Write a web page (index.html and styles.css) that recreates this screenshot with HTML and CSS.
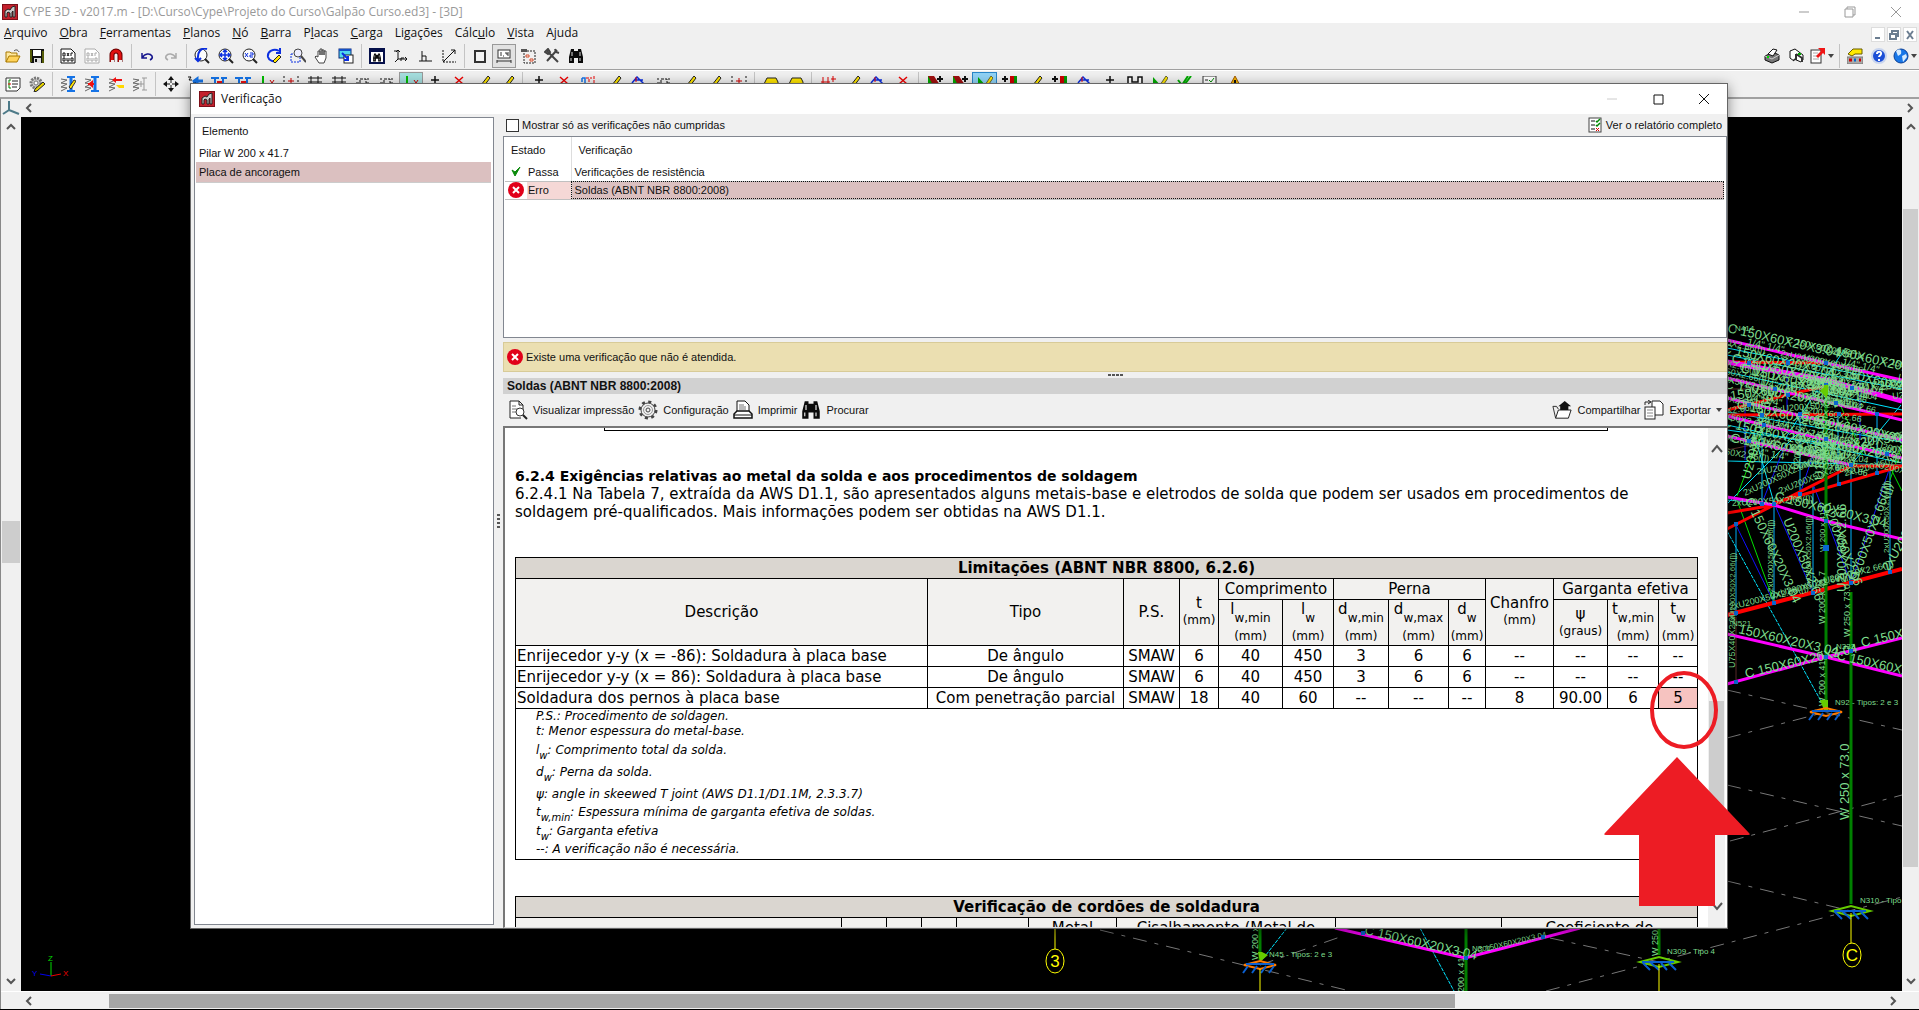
FILE: index.html
```html
<!DOCTYPE html>
<html lang="pt-BR">
<head>
<meta charset="utf-8">
<title>CYPE 3D - v2017.m</title>
<link rel="stylesheet" href="styles.css">
</head>
<body>
<svg class="defs" aria-hidden="true">
  <defs>
    <symbol id="i-app" viewBox="0 0 16 16"><rect width="16" height="16" fill="#7d0f18"/><rect x="1" y="1" width="14" height="14" fill="#c3202c"/><path d="M3 13V7l3-2 2 1 2-3 3-1v11h-2V7l-1 1v5H8V9L6 8 5 9v4z" fill="#c9c9c9" stroke="#222"/></symbol>
    <symbol id="i-open" viewBox="0 0 16 16"><path d="M1 14V4h4l1 1h6v3" fill="#ffe9a0" stroke="#a87900"/><path d="M1 14l3-6h11l-3 6z" fill="#ffd35a" stroke="#a87900"/><path d="M9 3c2-2 4-1 5 1" fill="none" stroke="#444"/></symbol>
    <symbol id="i-save" viewBox="0 0 16 16"><path d="M1 1h14v14H2l-1-1z" fill="#111"/><rect x="4" y="2" width="8" height="6" fill="#fff"/><rect x="5" y="10" width="7" height="5" fill="#ddd"/><rect x="6" y="11" width="2" height="3" fill="#111"/><path d="M2 2v12M14 3v12" stroke="#9aa800"/></symbol>
    <symbol id="i-dxf" viewBox="0 0 16 16"><path d="M1 1h10l4 4v10H1z" fill="#fff" stroke="currentColor"/><path d="M3 5v3h2V5zM7 5l2 3M9 5L7 8M11 8V5h2M3 10v3h2v-3zM7 10v3h2v-3M11 10h2v3h-2z" fill="none" stroke="currentColor"/></symbol>
    <symbol id="i-magnet" viewBox="0 0 16 16"><path d="M4 14V7a4 4 0 018 0v7" fill="none" stroke="#600" stroke-width="5"/><path d="M4 14V7a4 4 0 018 0v7" fill="none" stroke="#e01010" stroke-width="3"/><path d="M3 13h3M11 13h3" stroke="#eee" stroke-width="2"/></symbol>
    <symbol id="i-undo" viewBox="0 0 16 16"><path d="M3 5v5h5M3 10c3-5 8-5 10-2 1 2 0 3-2 4" fill="none" stroke="currentColor" stroke-width="1.5"/></symbol>
    <symbol id="i-lens" viewBox="0 0 16 16"><circle cx="7" cy="7" r="6" fill="#fff" fill-opacity=".7" stroke="#222"/><path d="M11 11l4 4" stroke="#222" stroke-width="2"/></symbol>
    <symbol id="i-zall" viewBox="0 0 16 16"><use href="#i-lens"/><path d="M7 2v10M2 7h10M5 4l2-2 2 2M5 10l2 2 2-2M4 5L2 7l2 2M10 5l2 2-2 2" fill="none" stroke="#0b2fe0" stroke-width="1.5"/></symbol>
    <symbol id="i-zprev" viewBox="0 0 16 16"><use href="#i-lens"/><path d="M13 1C7-1 3 4 4 12M1 10l3 3 3-3" fill="none" stroke="#0b2fe0" stroke-width="2"/></symbol>
    <symbol id="i-z2" viewBox="0 0 16 16"><use href="#i-lens"/><path d="M3 5l3 4M6 5L3 9M8 5h3v2H8v2h3" fill="none" stroke="#0b2fe0"/></symbol>
    <symbol id="i-redraw" viewBox="0 0 16 16"><path d="M13 3C8 0 1 3 2 9c1 4 6 5 9 4M10 5h4V0" fill="none" stroke="#0b2fe0" stroke-width="2"/><path d="M7 13l6-6 2 2-6 6z" fill="#ffe500" stroke="#222"/></symbol>
    <symbol id="i-zwin" viewBox="0 0 16 16"><rect x="1" y="6" width="9" height="8" fill="none" stroke="#0b2fe0" stroke-dasharray="2 1"/><circle cx="8" cy="5" r="4" fill="#eef" stroke="#444"/><path d="M11 8l5 6" stroke="#444" stroke-width="2"/></symbol>
    <symbol id="i-hand" viewBox="0 0 16 16"><path d="M5 15L1 9l1-1 2 1V3h2v4-6h2v6-5h2v5-4h2v7l-2 5z" fill="#fff" stroke="#444"/></symbol>
    <symbol id="i-fit" viewBox="0 0 16 16"><rect x="1" y="1" width="12" height="9" fill="#4fd8ef" stroke="#0a2a7a"/><rect x="1" y="1" width="12" height="2" fill="#1450c8"/><rect x="6" y="7" width="9" height="8" fill="#fff" stroke="#222"/><path d="M4 5l6 6M10 8v4H6" stroke="#0b2fe0" fill="none" stroke-width="2"/></symbol>
    <symbol id="i-bino" viewBox="0 0 16 16"><path d="M3 1h3v2h4V1h3l2 8v6h-5v-5H6v5H1V9z" fill="#0a0a0a"/><path d="M4 4v4M12 4v4M3 10v3M12 10v3" stroke="#ddd"/></symbol>
    <symbol id="i-findbox" viewBox="0 0 16 16"><rect x="1" y="1" width="14" height="14" fill="#fff" stroke="#05104a" stroke-width="2"/><rect x="1" y="1" width="14" height="3" fill="#05104a"/><use href="#i-bino" x="3" y="5" width="10" height="9"/></symbol>
    <symbol id="i-coord" viewBox="0 0 16 16"><path d="M5 2v9h9M3 4l2-2 2 2M12 9l2 2-2 2M5 11l-3 3M1 3h3M8 13v-3h3" fill="none" stroke="#111"/></symbol>
    <symbol id="i-perp" viewBox="0 0 16 16"><path d="M2 13h13M5 13V3M5 8h4v5" fill="none" stroke="#111"/></symbol>
    <symbol id="i-diag" viewBox="0 0 16 16"><path d="M2 14L14 2" stroke="#111"/><path d="M10 2h4v4" fill="none" stroke="#111"/><path d="M2 2v12h13" fill="none" stroke="#111" stroke-dasharray="2 1"/></symbol>
    <symbol id="i-square" viewBox="0 0 16 16"><rect x="3" y="3" width="10" height="11" fill="#f4f4f4" stroke="#333" stroke-width="2"/></symbol>
    <symbol id="i-dim" viewBox="0 0 16 16"><rect x="2" y="2" width="12" height="8" fill="#fff" stroke="#333"/><path d="M5 4v4M7 8h1M10 4v2h2M12 4v4M1 13h14M1 12v3M15 12v3" stroke="#333" fill="none"/></symbol>
    <symbol id="i-select" viewBox="0 0 16 16"><path d="M1 3h14v12H4V3" fill="none" stroke="#222" stroke-dasharray="2 1"/><path d="M1 1h6v3H1z" fill="#555"/><path d="M6 7h3v2H6zM10 11h3v2h-3z" fill="#fff" stroke="#d04a2a"/></symbol>
    <symbol id="i-tools" viewBox="0 0 16 16"><path d="M3 3l11 11M13 2L3 13" stroke="#444" stroke-width="2"/><path d="M1 4l3-3 2 3-2 2zM11 1l1 3 3 1" fill="none" stroke="#444" stroke-width="2"/></symbol>
    <symbol id="i-printer" viewBox="0 0 16 16"><path d="M1 8l8-4 6 3v5l-7 3-7-3z" fill="#777" stroke="#111"/><path d="M4 6l5-5 4 1-4 6z" fill="#fff" stroke="#111"/><path d="M1 8l7 3 7-4" stroke="#ccc" fill="none"/><path d="M3 9h2" stroke="#0d0" stroke-width="2"/></symbol>
    <symbol id="i-plot" viewBox="0 0 16 16"><path d="M2 3l5-2 8 6v5l-2 2-7-3v2l-4-3z" fill="#fff" stroke="#111"/><path d="M8 6l6 4v4M8 6v6" stroke="#333" stroke-width="2" fill="none"/><path d="M10 6h3" stroke="#0a0" stroke-width="2"/></symbol>
    <symbol id="i-export" viewBox="0 0 16 16"><rect x="1" y="2" width="10" height="13" fill="#fff" stroke="#333"/><path d="M3 5h5M3 8h6M3 11h6" stroke="#aaa"/><path d="M8 0h7v7l-2-2-5 5-2-2 5-5z" fill="#f01515"/></symbol>
    <symbol id="i-config" viewBox="0 0 16 16"><path d="M1 6l5-5h9v5H8L5 8z" fill="#ffe900" stroke="#665a00"/><rect x="0" y="9" width="16" height="7" fill="#aaa" stroke="#777"/><path d="M2 12h3" stroke="#c00" stroke-width="3"/><path d="M7 12h2" stroke="#06c" stroke-width="3"/><path d="M12 12h2" stroke="#c00" stroke-width="3"/></symbol>
    <symbol id="i-help" viewBox="0 0 16 16"><circle cx="8" cy="8" r="7" fill="#1c4fd6" stroke="#c9d5ee" stroke-width="2"/><path d="M6 6c0-3 5-3 4 0 0 1-2 2-2 3M8 11v2" stroke="#fff" stroke-width="2" fill="none"/></symbol>
    <symbol id="i-globe" viewBox="0 0 16 16"><circle cx="8" cy="8" r="7" fill="#1877e8" stroke="#0a3f96"/><path d="M3 3c4-3 6-1 5 3l-3 2zM9 8l4-2 1 3-4 5z" fill="#d6ecff"/></symbol>
    <symbol id="i-list" viewBox="0 0 16 16"><path d="M1 2h14v10l-3 3H1z" fill="#fff" stroke="#333"/><path d="M6 4H4v8h2" fill="none" stroke="#080"/><path d="M7 5h6M7 8h6M7 11h5" stroke="#222"/><path d="M3 8h3" stroke="#d00"/></symbol>
    <symbol id="i-gearpen" viewBox="0 0 16 16"><circle cx="7" cy="7" r="5" fill="#ccc" stroke="#777" stroke-width="3" stroke-dasharray="2 1"/><circle cx="7" cy="7" r="2" fill="#fff" stroke="#777"/><path d="M6 13l8-7 2 2-8 7-3 1z" fill="#e8d400" stroke="#222"/></symbol>
    <symbol id="i-zig" viewBox="0 0 16 16"><path d="M1 3l6 1-6 3 6 1-6 3 6 1-6 3" fill="none" stroke="#666"/></symbol>
    <symbol id="i-beam" viewBox="0 0 16 16"><path d="M7 1h8M7 15h8" stroke="#1573e6" stroke-width="2"/><path d="M11 1v14" stroke="#1573e6" stroke-width="3"/></symbol>
    <symbol id="i-bpen" viewBox="0 0 16 16"><use href="#i-zig"/><use href="#i-beam"/><path d="M9 11l5-7 2 1-5 8z" fill="#ffe500" stroke="#333"/></symbol>
    <symbol id="i-barr" viewBox="0 0 16 16"><use href="#i-zig"/><use href="#i-beam"/><path d="M4 8l5-4v8z" fill="#e11"/><path d="M4 8h6" stroke="#e11" stroke-width="2"/></symbol>
    <symbol id="i-brow" viewBox="0 0 16 16"><use href="#i-zig"/><path d="M5 4h9" stroke="#e11" stroke-width="2"/><path d="M4 4l4-3v6z" fill="#e11"/><path d="M8 9h8v3h-5z" fill="#ffd800"/></symbol>
    <symbol id="i-bgray" viewBox="0 0 16 16"><use href="#i-zig"/><path d="M6 8h6M9 5v6M12 2v12M10 2h5M10 14h5" fill="none" stroke="#999"/></symbol>
    <symbol id="i-move" viewBox="0 0 16 16"><path d="M8 0l3 4H5zM8 16l3-4H5zM0 8l4-3v6zM16 8l-4-3v6z" fill="#111"/><path d="M8 3v4M8 9v4M3 8h4M9 8h4" stroke="#111"/></symbol>
    <symbol id="i-a" viewBox="0 0 16 16"><path d="M1 1h3L2 4h3" stroke="#111" fill="none"/><path d="M6 6l4-3v12M10 5h6" stroke="#1573e6" stroke-width="3"/></symbol>
    <symbol id="i-tt" viewBox="0 0 16 16"><path d="M0 2h8M10 2h6M4 2v12M12 2v12" stroke="#1573e6" stroke-width="2"/><path d="M6 6h5" stroke="#e11" stroke-width="2"/></symbol>
    <symbol id="i-axis" viewBox="0 0 16 16"><path d="M4 0v8h5" stroke="#0b0" stroke-width="2" fill="none"/><path d="M11 4l2 3 2-3" stroke="#c00" fill="none"/></symbol>
    <symbol id="i-dot" viewBox="0 0 16 16"><path d="M1 0v16M15 0v16" stroke="#111" stroke-dasharray="2 2"/><path d="M5 5h6M8 2v6" stroke="#c00"/></symbol>
    <symbol id="i-grid" viewBox="0 0 16 16"><path d="M1 2h14M4 0v9M11 0v9M1 6h14" stroke="#111" fill="none"/></symbol>
    <symbol id="i-box" viewBox="0 0 16 16"><path d="M5 3h6v8H5zM1 7h4M11 7h4M2 2v2M13 2v2" stroke="#111" fill="none" stroke-dasharray="3 1"/></symbol>
    <symbol id="i-plus" viewBox="0 0 16 16"><path d="M4 4h8M8 0v8" stroke="#111" stroke-width="1.5"/></symbol>
    <symbol id="i-x" viewBox="0 0 16 16"><path d="M4 1l8 7M12 1L4 8" stroke="#e00" stroke-width="1.5"/></symbol>
    <symbol id="i-pen" viewBox="0 0 16 16"><path d="M6 9l7-9 2 2-6 8z" fill="#ffe500" stroke="#222"/></symbol>
    <symbol id="i-red" viewBox="0 0 16 16"><path d="M1 2h3v8M1 2v4" stroke="#1573e6" fill="none" stroke-width="1.5"/><path d="M8 3v7M5 2h6M13 0v9" stroke="#e00" fill="none" stroke-dasharray="3 1"/></symbol>
    <symbol id="i-loads" viewBox="0 0 16 16"><path d="M3 1v9M8 1v9M1 6h9M11 3h5M13 0v6" stroke="#d00" fill="none"/></symbol>
    <symbol id="i-blue" viewBox="0 0 16 16"><path d="M1 7l5-6 8 8M3 4h9" stroke="#0b2fe0" fill="none" stroke-width="1.5"/><path d="M5 1v5" stroke="#e00"/></symbol>
    <symbol id="i-plate" viewBox="0 0 16 16"><path d="M1 0h6l6 9H1z" fill="#a01010"/><path d="M1 0l5 9H1z" fill="#0a0"/><path d="M10 3h6M13 0v6" stroke="#111" stroke-width="2"/></symbol>
    <symbol id="i-tri" viewBox="0 0 16 16"><path d="M1 1l9 10H1z" fill="#0a0"/><path d="M8 9l6-9 2 2-6 9z" fill="#ffe500" stroke="#663"/></symbol>
    <symbol id="i-col" viewBox="0 0 16 16"><path d="M0 3h6M3 0v6" stroke="#111" stroke-width="2"/><rect x="8" y="0" width="4" height="12" fill="#c00"/><rect x="12" y="0" width="3" height="12" fill="#090"/></symbol>
    <symbol id="i-yel" viewBox="0 0 16 16"><path d="M1 8l3-6h9l2 4v4H1z" fill="#ffe500" stroke="#222"/></symbol>
    <symbol id="i-frame" viewBox="0 0 16 16"><path d="M1 12V1h4v5h6V1h4v11" fill="#fff" stroke="#111" stroke-width="1.5"/></symbol>
    <symbol id="i-check" viewBox="0 0 16 16"><path d="M1 4l4 5 6-9M8 8l6-8" stroke="#0a0" fill="none" stroke-width="2"/></symbol>
    <symbol id="i-chklist" viewBox="0 0 16 16"><rect x="1" y="0" width="13" height="14" fill="#fff" stroke="#333"/><path d="M3 4h3M3 9h3" stroke="#222"/><path d="M7 4l2 2 3-4M7 9l2 2 3-4" stroke="#080" fill="none"/></symbol>
    <symbol id="i-warn" viewBox="0 0 16 16"><path d="M8 0l7 13H1z" fill="#f5b400" stroke="#a05a00"/><path d="M8 4v5" stroke="#111" stroke-width="2"/></symbol>
    <symbol id="i-err" viewBox="0 0 16 16"><circle cx="8" cy="8" r="8" fill="#e1001a"/><path d="M5 5l6 6M11 5l-6 6" stroke="#fff" stroke-width="2"/></symbol>
    <symbol id="i-pass" viewBox="0 0 12 12"><path d="M2 4l3 6 5-9-5 5z" fill="#0a8a0a" stroke="#0a8a0a"/></symbol>
    <symbol id="i-report" viewBox="0 0 14 16"><rect x="1" y="1" width="12" height="14" fill="#fff" stroke="#444"/><path d="M3 4h4M3 8h4M3 12h4" stroke="#111"/><path d="M8 4l1 1 3-3M8 8l1 1 3-3" fill="none" stroke="#080" stroke-width="1.5"/><path d="M8 11l3 3M11 11l-3 3" stroke="#d00"/></symbol>
    <symbol id="i-preview" viewBox="0 0 20 20"><path d="M13 18H2V1h9l4 4v5M11 1v4h4" fill="#fff" stroke="#222"/><path d="M4 6h4M4 9h5M4 12h4" stroke="#777"/><circle cx="12" cy="12" r="4" fill="#fff" stroke="#333"/><path d="M15 15l4 4" stroke="#222" stroke-width="2"/></symbol>
    <symbol id="i-gear" viewBox="0 0 20 20"><circle cx="10" cy="10" r="8" fill="none" stroke="#444" stroke-width="3" stroke-dasharray="3 3.28"/><circle cx="10" cy="10" r="7" fill="#f0f0f0" stroke="#444"/><circle cx="10" cy="10" r="2" fill="none" stroke="#444"/><circle cx="10" cy="10" r="4.5" fill="none" stroke="#999"/></symbol>
    <symbol id="i-print" viewBox="0 0 20 20"><path d="M4 11V1h8l4 4v6" fill="#fff" stroke="#111"/><path d="M6 5h5M6 7h7M6 9h7" stroke="#777"/><path d="M1 18v-4l3-3h12l3 3v4z" fill="#fff" stroke="#111" stroke-width="1.5"/><path d="M1 15h18" stroke="#111"/></symbol>
    <symbol id="i-share" viewBox="0 0 22 20"><path d="M1 6h4l2 3M1 6l3 13" fill="#ddd" stroke="#222"/><path d="M4 19L7 10h14l-3 9z" fill="#fff" stroke="#111"/><path d="M9 10V6H7l7-6 7 6h-3v4z" fill="#111"/></symbol>
    <symbol id="i-exp" viewBox="0 0 20 20"><path d="M8 1h8l3 3v11H8z" fill="#fff" stroke="#222"/><rect x="1" y="7" width="10" height="12" fill="#fff" stroke="#222"/><path d="M3 10h6M3 13h6M3 16h6" stroke="#888"/><path d="M1 5V2h5M4 0l3 2-3 2" fill="none" stroke="#222"/></symbol>
    <g id="support"><path d="M-16 0L0 4 16 0 0 -4z" fill="none" stroke="currentColor" stroke-width="2"/><path d="M-14 -1h28M-12 1l-5 7M-3 1l-5 7M6 1l-5 7M14 1l-5 7" stroke="#0a5fd0" stroke-width="2" fill="none"/></g>
    <g id="support-flip"><path d="M-19 0L0 -5 19 0 0 5z" fill="none" stroke="#6c0" stroke-width="2"/><path d="M-17 0h32M-16 1l7 7M-8 1l8 7M2 1l6 7M10 1l7 7" stroke="#0a5fd0" stroke-width="2" fill="none"/></g>
    <g id="tangle">
      <text>C 150X60X20X3.04</text><text x="-40" y="13" font-size="9">2xU200X50X2.66([])</text><text x="60" y="-3" font-size="9">C 150X60X20X3.04</text><text x="22" y="8" font-size="10">1/4" 1/4"</text><text x="80" y="10" font-size="9">U200X60X2.66</text>
    </g>
  </defs>
</svg>

<header class="titlebar">
  <svg class="ic"><use href="#i-app"/></svg>
  <h1>CYPE 3D - v2017.m - [D:\Curso\Cype\Projeto do Curso\Galpão Curso.ed3] - [3D]</h1>
  <div class="winbtns pale">
    <button aria-label="Minimizar"><svg viewBox="0 0 12 12"><path d="M1 6h10"/></svg></button>
    <button aria-label="Restaurar"><svg viewBox="0 0 12 12"><path d="M1 3h8v8H1zM3 3V1h8v8H9"/></svg></button>
    <button aria-label="Fechar"><svg viewBox="0 0 12 12"><path d="M1 1l10 10M11 1L1 11"/></svg></button>
  </div>
</header>

<nav class="menubar">
  <a href="#"><u>A</u>rquivo</a><a href="#"><u>O</u>bra</a><a href="#"><u>F</u>erramentas</a><a href="#"><u>P</u>lanos</a><a href="#"><u>N</u>ó</a><a href="#"><u>B</u>arra</a><a href="#">P<u>l</u>acas</a><a href="#"><u>C</u>arga</a><a href="#">Ligações</a><a href="#">Cálc<u>u</u>lo</a><a href="#"><u>V</u>ista</a><a href="#">Ajuda</a>
  <div class="mdi">
    <button aria-label="Minimizar janela"><svg viewBox="0 0 12 12"><path d="M3 9h5"/></svg></button>
    <button aria-label="Restaurar janela"><svg viewBox="0 0 12 12"><path d="M2 5h6v5H2zM4 5V2h6v5H8"/></svg></button>
    <button aria-label="Fechar janela"><svg viewBox="0 0 12 12"><path d="M3 2l6 8M9 2l-6 8"/></svg></button>
  </div>
</nav>

<div class="toolbar">
  <button aria-label="Abrir"><svg><use href="#i-open"/></svg></button><button aria-label="Salvar"><svg><use href="#i-save"/></svg></button><i></i>
  <button aria-label="DXF"><svg><use href="#i-dxf"/></svg></button><button class="dim" aria-label="Camadas DXF"><svg><use href="#i-dxf"/></svg></button><button aria-label="Capturas"><svg><use href="#i-magnet"/></svg></button><i></i>
  <button class="navy" aria-label="Desfazer"><svg><use href="#i-undo"/></svg></button><button class="dim flip" aria-label="Refazer"><svg><use href="#i-undo"/></svg></button><i></i>
  <button aria-label="Vista anterior"><svg><use href="#i-zprev"/></svg></button><button aria-label="Vista completa"><svg><use href="#i-zall"/></svg></button><button aria-label="Duplicar"><svg><use href="#i-z2"/></svg></button><button aria-label="Redesenhar"><svg><use href="#i-redraw"/></svg></button><button aria-label="Janela de zoom"><svg><use href="#i-zwin"/></svg></button><button aria-label="Mover vista"><svg><use href="#i-hand"/></svg></button><button aria-label="Ajustar"><svg><use href="#i-fit"/></svg></button><i></i>
  <button aria-label="Localizar"><svg><use href="#i-findbox"/></svg></button><button aria-label="Coordenadas"><svg><use href="#i-coord"/></svg></button><button aria-label="Ortogonal"><svg><use href="#i-perp"/></svg></button><button aria-label="Diagonal"><svg><use href="#i-diag"/></svg></button><i></i>
  <button aria-label="Quadro"><svg><use href="#i-square"/></svg></button><button class="on" aria-label="Cotas"><svg><use href="#i-dim"/></svg></button><button aria-label="Seleção"><svg><use href="#i-select"/></svg></button><button aria-label="Ferramentas"><svg><use href="#i-tools"/></svg></button><button aria-label="Procurar"><svg><use href="#i-bino"/></svg></button>
  <span class="grow"></span>
  <button aria-label="Imprimir"><svg><use href="#i-printer"/></svg></button><button aria-label="Plotar"><svg><use href="#i-plot"/></svg></button><button class="wide" aria-label="Exportar"><svg><use href="#i-export"/></svg><b></b></button><i></i>
  <button aria-label="Configurar"><svg><use href="#i-config"/></svg></button><button aria-label="Ajuda"><svg><use href="#i-help"/></svg></button><button class="wide" aria-label="Web"><svg><use href="#i-globe"/></svg><b></b></button>
</div>

<div class="toolbar second">
  <button aria-label="Listagem"><svg><use href="#i-list"/></svg></button><button aria-label="Opções"><svg><use href="#i-gearpen"/></svg></button><i></i>
  <button aria-label="Editar perfil"><svg><use href="#i-bpen"/></svg></button><button aria-label="Atribuir"><svg><use href="#i-barr"/></svg></button><button aria-label="Retirar"><svg><use href="#i-brow"/></svg></button><button aria-label="Grupo"><svg><use href="#i-bgray"/></svg></button><i></i>
  <button aria-label="Mover"><svg><use href="#i-move"/></svg></button><button aria-label="Girar"><svg><use href="#i-a"/></svg></button><button aria-label="Viga"><svg><use href="#i-tt"/></svg></button><button aria-label="Viga dupla"><svg><use href="#i-tt"/></svg></button><button aria-label="Eixos"><svg><use href="#i-axis"/></svg></button><button aria-label="Pontos"><svg><use href="#i-dot"/></svg></button><button aria-label="Grade"><svg><use href="#i-grid"/></svg></button><button aria-label="Malha"><svg><use href="#i-grid"/></svg></button><button aria-label="Caixa"><svg><use href="#i-box"/></svg></button><button aria-label="Recorte"><svg><use href="#i-box"/></svg></button><button class="on teal" aria-label="Eixos locais"><svg><use href="#i-axis"/></svg></button><button aria-label="Novo nó"><svg><use href="#i-plus"/></svg></button><button aria-label="Apagar nó"><svg><use href="#i-x"/></svg></button><button aria-label="Editar nó"><svg><use href="#i-pen"/></svg></button><button aria-label="Editar apoio"><svg><use href="#i-pen"/></svg></button><i></i>
  <div class="loose">
  <button aria-label="Nova barra"><svg><use href="#i-plus"/></svg></button><button aria-label="Apagar barra"><svg><use href="#i-x"/></svg></button><button aria-label="Dividir"><svg><use href="#i-red"/></svg></button><button aria-label="Editar barra"><svg><use href="#i-pen"/></svg></button><button aria-label="Rótulas"><svg><use href="#i-blue"/></svg></button><button aria-label="Flecha"><svg><use href="#i-box"/></svg></button><button aria-label="Flambagem"><svg><use href="#i-pen"/></svg></button><button aria-label="Perfil"><svg><use href="#i-pen"/></svg></button><button aria-label="Info"><svg><use href="#i-dot"/></svg></button><i></i>
  <button aria-label="Placa"><svg><use href="#i-yel"/></svg></button><button aria-label="Laje"><svg><use href="#i-yel"/></svg></button><i></i>
  <button aria-label="Nova carga"><svg><use href="#i-loads"/></svg></button><button aria-label="Editar carga"><svg><use href="#i-pen"/></svg></button><button aria-label="Mover carga"><svg><use href="#i-blue"/></svg></button><button aria-label="Apagar carga"><svg><use href="#i-x"/></svg></button><i></i>
  <button aria-label="Gerar ligação"><svg><use href="#i-plate"/></svg></button><button aria-label="Apagar ligação"><svg><use href="#i-plate"/></svg></button><button class="on sky" aria-label="Editar ligação"><svg><use href="#i-tri"/></svg></button><button aria-label="Nova placa"><svg><use href="#i-col"/></svg></button><button aria-label="Editar placa"><svg><use href="#i-pen"/></svg></button><button aria-label="Girar placa"><svg><use href="#i-col"/></svg></button><button aria-label="Igualar"><svg><use href="#i-blue"/></svg></button><button aria-label="Cotar"><svg><use href="#i-plus"/></svg></button><button aria-label="Pórtico"><svg><use href="#i-frame"/></svg></button><button aria-label="Soldas"><svg><use href="#i-tri"/></svg></button><button aria-label="Verificar"><svg><use href="#i-check"/></svg></button><button aria-label="Verificações"><svg><use href="#i-chklist"/></svg></button><button aria-label="Avisos"><svg><use href="#i-warn"/></svg></button>
  </div>
</div>

<main class="view">
  <div class="corner"><svg viewBox="0 0 18 18"><path d="M7 2v9l-6 4M7 11l10 4" fill="none" stroke="#4d7a88" stroke-width="2"/></svg></div>
  <div class="hbar"><svg class="chev"><path d="M7 2L3 6l4 4"/></svg><span class="grow"></span><svg class="chev"><path d="M4 2l4 4-4 4"/></svg></div>
  <div class="vbar left"><svg class="chev"><path d="M2 8l4-4 4 4"/></svg><span></span><svg class="chev"><path d="M2 4l4 4 4-4"/></svg></div>
  <svg class="scene" viewBox="21 117 1881 874" preserveAspectRatio="xMaxYMax slice">
    <g fill="none" stroke="#777" stroke-dasharray="14 8 4 8">
      <path d="M1727 690L1902 730M1727 738L1826 712M1727 785L1902 826M1730 841L1902 795M1727 881L1851 911M1546 991L1902 897M1100 930L1350 991M1260 965L1340 937M1550 938L1659 962"/>
    </g>
    <g fill="none" stroke="#5a2c2c"><path d="M1727 389H1902M1727 450l60-12h115M1736 617v64"/></g>
    <g fill="none" stroke="#00b4ff"><path d="M1736 523v93M1762 410v93M1774 503v100M1800 414v80M1813 484v109M1838 414v70M1851 465v118M1877 412v60M1890 467v105"/></g>
    <g fill="none" stroke="#00e5ff"><path d="M1727 348l175 35M1727 355l175 34M1727 372l175 38M1727 412l175 30M1727 425l175 38M1727 461l175 4M1727 504l75-75M1727 500l47 4M1774 503l-20-70M1784 440l60-90M1851 465l50-60M1727 430l165 22"/><path d="M1727 531L1822 703M1287 928l-25 32M1420 928l34 63" stroke-dasharray="4 1"/></g>
    <g fill="none" stroke="#1010ff"><path d="M1736 525l38 78M1774 503l39 90M1813 484l38 99 39-116M1762 503l24-60M1800 494l20-60M1745 400v60M1787 360v50M1860 380v60"/></g>
    <g fill="none" stroke="#00e000"><path d="M1737 500l37 102M1762 430l-25 66M1838 400l25 55M1890 467l12 24M1890 480l12-35"/></g>
    <g fill="none" stroke="#f00" stroke-width="3"><path d="M1727 362l99 1M1727 410l60-15 39-9M1727 415l175-1M1727 513l47-8M1727 529l47-24 77-39h51M1774 503l128-37"/><path d="M1727 615L1902 569" stroke-width="4"/></g>
    <g fill="none" stroke="#f0f" stroke-width="3"><path d="M1727 340l99 23 76 17M1727 378l175 42M1727 398l175 42M1727 416l175 42M1727 436l124 29M1727 497l47 8 52 16 76 18M1727 634l99 23 76 19M1727 684l99-27 76-19M1335 928l130 30 35-9 80-21"/><path d="M1727 362l99 18 76 21" stroke-width="5"/></g>
    <g fill="none" stroke="#008000" stroke-width="3"><path d="M1826 385v315M1851 592v312M1659 927v28M1260 927v33M1466 928v63"/></g>
    <g fill="#7ddc8c" font-size="13">
      <use href="#tangle" transform="translate(1727 332) rotate(13)"/>
      <use href="#tangle" transform="translate(1722 352) rotate(13)"/>
      <use href="#tangle" transform="translate(1731 362) rotate(13)"/>
      <use href="#tangle" transform="translate(1740 372) rotate(13)"/>
      <use href="#tangle" transform="translate(1724 388) rotate(10)"/>
      <use href="#tangle" transform="translate(1718 402) rotate(-8)"/>
      <use href="#tangle" transform="translate(1736 408) rotate(13)"/>
      <use href="#tangle" transform="translate(1722 426) rotate(13)"/>
      <use href="#tangle" transform="translate(1730 442) rotate(10)"/>
      <use href="#tangle" transform="translate(1822 352) rotate(13)"/>
      <use href="#tangle" transform="translate(1830 374) rotate(13)"/>
      <use href="#tangle" transform="translate(1812 396) rotate(-5)"/>
      <use href="#tangle" transform="translate(1802 440) rotate(13)"/>
      <use href="#tangle" transform="translate(1800 420) rotate(13)"/>
      <use href="#tangle" transform="translate(1795 456) rotate(-8)"/>
      <text transform="translate(1774 500) rotate(14)">C 150X60X20X3.04</text>
      <text transform="translate(1745 496) rotate(-25)" font-size="9">2xU200X50X2.66([])</text>
      <text transform="translate(1780 494) rotate(-22)" font-size="9">2xU200X50X2.66([])</text>
      <text transform="translate(1732 506) rotate(-3)" font-size="9">2xU200X50X2.66([])</text>
      <text transform="translate(1845 476) rotate(-14)" font-size="9">2xU200X50X2.66</text>
      <text transform="translate(1730 610) rotate(-14)" font-size="9">2xU200X50X2.66([])</text>
      <text transform="translate(1772 598) rotate(-14)" font-size="9">2xU200X50X2.66([])</text>
      <text transform="translate(1815 586) rotate(-14)" font-size="9">2xU200X50X2.66([])</text>
      <text transform="translate(1745 500) rotate(65)">C 150X60X20X3.04</text>
      <text transform="translate(1783 520) rotate(68)">U200X50X2.66</text>
      <text transform="translate(1822 505) rotate(68)">U200X50X2.66</text>
      <text transform="translate(1857 582) rotate(-70)">U200X50X2.66([])</text>
      <text transform="translate(1846 592) rotate(-90)">U200X60X2.66</text>
      <text transform="translate(1824 480) rotate(-90)">U150X2.66</text>
      <text transform="translate(1735 625) rotate(-90)" font-size="8">2xU200X50X2.66([])</text>
      <text transform="translate(1773 592) rotate(-90)" font-size="8">2xU200X50X2.66([])</text>
      <text transform="translate(1811 588) rotate(-90)" font-size="8">2xU200X50X2.66([])</text>
      <text transform="translate(1889 553) rotate(-90)" font-size="8">2xU200X50X2.66([])</text>
      <text transform="translate(1798 470) rotate(-80)" font-size="9">U200X50X2.66</text>
      <text transform="translate(1750 480) rotate(-75)">U200X50X2.66</text>
      <text transform="translate(1889 572) rotate(-60)">2xU200X50X2.66</text>
      <text transform="translate(1825 552) rotate(-90)" font-size="8">W 200 x 41.7</text>
      <text transform="translate(1825 624) rotate(-90)" font-size="9">W 200 x 41.7</text>
      <text transform="translate(1850 637) rotate(-90)" font-size="9">W 250 x 73.0</text>
      <text transform="translate(1825 706) rotate(-90)" font-size="9">W 200 x 41.7</text>
      <text transform="translate(1735 668) rotate(-90)" font-size="9">U75X40X2.00</text>
      <text transform="translate(1738 633) rotate(13)">150X60X20X3.04</text>
      <text transform="translate(1746 678) rotate(-13)">C 150X60X20X3.04</text>
      <text transform="translate(1836 659) rotate(13)">C 150X60X20</text>
      <text transform="translate(1862 647) rotate(-13)">C 150X60</text>
      <text x="1732" y="626" font-size="8">N521</text>
      <text x="1836" y="649" font-size="8">N333</text>
      <text x="1735" y="331" font-size="8">N414</text>
      <text x="1838" y="355" font-size="8">N404</text>
      <text x="1835" y="705" font-size="8">N92 - Tipos: 2 e 3</text>
      <text x="1860" y="903" font-size="8">N310 - Tipo</text>
      <text x="1667" y="954" font-size="8">N309 - Tipo 4</text>
      <text x="1269" y="957" font-size="8">N45 - Tipos: 2 e 3</text>
      <text transform="translate(1849 820) rotate(-90)">W 250 x 73.0</text>
      <text transform="translate(1658 956) rotate(-90)" font-size="9">W 250 x 73.0</text>
      <text transform="translate(1258 960) rotate(-90)" font-size="9">W 200 x 41.7</text>
      <text transform="translate(1464 992) rotate(-90)" font-size="9">200 x 41.7</text>
      <text transform="translate(1364 934) rotate(13)">C 150X60X20X3.04</text>
      <text x="1472" y="951" font-size="8">N301</text>
      <text transform="translate(1478 953) rotate(-13)" font-size="8">C 150X60X20X3.04</text>
    </g>
    <path fill="#0a66d0" d="M1747 361h4v4h-4zM1786 361h4v4h-4zM1824 361h4v4h-4zM1773 387h4v4h-4zM1786 393h4v4h-4zM1824 383h4v4h-4zM1850 386h4v4h-4zM1747 403h4v4h-4zM1760 413h4v4h-4zM1798 412h4v4h-4zM1834 401h4v4h-4zM1837 412h4v4h-4zM1875 412h4v4h-4zM1762 423h4v4h-4zM1747 439h4v4h-4zM1824 437h4v4h-4zM1849 463h4v4h-4zM1885 452h4v4h-4zM1875 471h4v4h-4zM1734 522h4v4h-4zM1760 502h4v4h-4zM1772 502h4v4h-4zM1798 492h4v4h-4zM1837 482h4v4h-4zM1824 519h4v4h-4zM1823 545h6v6h-6zM1734 611h4v4h-4zM1772 601h4v4h-4zM1811 591h4v4h-4zM1849 581h4v4h-4zM1888 570h4v4h-4zM1824 655h4v4h-4zM1849 649h4v4h-4zM1734 680h4v4h-4zM1361 931h4v4h-4zM1464 956h4v4h-4zM1541 935h4v4h-4z"/>
    <path fill="#6c0" d="M1820 391l7-7v14zM1820 700h8v10h-4zM1258 952h4l6 3-8 7zM1824 385h4v10h-4z"/>
    <use href="#support" x="1826" y="712" color="#ff7a00"/>
    <use href="#support" x="1260" y="965" color="#ff7a00"/>
    <use href="#support-flip" x="1851" y="911"/>
    <use href="#support-flip" x="1659" y="962"/>
    <g stroke="#ff0" fill="none"><path d="M1851 913v30M1659 964v27M1260 969v22M1055 928v21"/><ellipse cx="1852" cy="955" rx="9" ry="12"/><ellipse cx="1055" cy="961" rx="9" ry="12"/></g>
    <g fill="#ff0" font-size="17" text-anchor="middle"><text x="1852" y="961">C</text><text x="1055" y="967">3</text></g>
    <path d="M51 962v14" stroke="#0d0"/><path d="M51 976l10-2" stroke="#e00"/><path d="M51 976l-11-2" stroke="#00e"/>
    <g font-size="8"><text x="48" y="961" fill="#0d0">Z</text><text x="63" y="976" fill="#e00">X</text><text x="32" y="976" fill="#00e">Y</text></g>
  </svg>
  <div class="vbar right"><svg class="chev"><path d="M2 8l4-4 4 4"/></svg><span></span><svg class="chev"><path d="M2 4l4 4 4-4"/></svg></div>
  <div class="hbar bottom"><svg class="chev"><path d="M7 2L3 6l4 4"/></svg><span class="thumb"></span><svg class="chev"><path d="M4 2l4 4-4 4"/></svg></div>
</main>

<section class="dialog" role="dialog" aria-label="Verificação">
  <header class="dlgtitle">
    <svg class="ic"><use href="#i-app"/></svg>
    <h2>Verificação</h2>
    <div class="winbtns">
      <button class="off" aria-label="Minimizar"><svg viewBox="0 0 12 12"><path d="M1 6h10"/></svg></button>
      <button aria-label="Maximizar"><svg viewBox="0 0 12 12"><path d="M2 2h9v9H2z"/></svg></button>
      <button aria-label="Fechar"><svg viewBox="0 0 12 12"><path d="M1 1l10 10M11 1L1 11"/></svg></button>
    </div>
  </header>
  <div class="dlgbody">
    <div class="elements">
      <table>
        <thead><tr><th>Elemento</th></tr></thead>
        <tbody><tr><td>Pilar W 200 x 41.7</td></tr><tr class="sel"><td>Placa de ancoragem</td></tr></tbody>
      </table>
    </div>
    <div class="vsplit"><s></s></div>
    <div class="results">
      <div class="filter">
        <input type="checkbox" id="only"><label for="only">Mostrar só as verificações não cumpridas</label>
        <span class="grow"></span>
        <button><svg class="rep"><use href="#i-report"/></svg>Ver o relatório completo</button>
      </div>
      <div class="checks">
        <table>
          <thead><tr><th class="c1">Estado</th><th>Verificação</th></tr></thead>
          <tbody>
            <tr><td><span class="st"><svg class="pass"><use href="#i-pass"/></svg>Passa</span></td><td>Verificações de resistência</td></tr>
            <tr class="err"><td><span class="st"><svg class="ic"><use href="#i-err"/></svg>Erro</span></td><td>Soldas (ABNT NBR 8800:2008)</td></tr>
          </tbody>
        </table>
      </div>
      <p class="alert"><svg class="ic"><use href="#i-err"/></svg>Existe uma verificação que não é atendida.</p>
      <div class="hsplit"><s></s></div>
      <h3 class="subject">Soldas (ABNT NBR 8800:2008)</h3>
      <div class="actions">
        <button><svg><use href="#i-preview"/></svg>Visualizar impressão</button>
        <button><svg><use href="#i-gear"/></svg>Configuração</button>
        <button><svg><use href="#i-print"/></svg>Imprimir</button>
        <button><svg><use href="#i-bino"/></svg>Procurar</button>
        <span class="grow"></span>
        <button><svg><use href="#i-share"/></svg>Compartilhar</button>
        <button><svg><use href="#i-exp"/></svg>Exportar<b></b></button>
      </div>
      <div class="docpane">
        <article class="doc">
          <div class="prev"></div>
          <h4>6.2.4 Exigências relativas ao metal da solda e aos procedimentos de soldagem</h4>
          <p>6.2.4.1 Na Tabela 7, extraída da AWS D1.1, são apresentados alguns metais-base e eletrodos de solda que podem ser usados em procedimentos de soldagem pré-qualificados. Mais informações podem ser obtidas na AWS D1.1.</p>
          <table class="limits">
            <colgroup><col><col class="w196"><col class="w56"><col class="w39"><col class="w64"><col class="w51"><col class="w55"><col class="w60"><col class="w37"><col class="w68"><col class="w54"><col class="w51"><col class="w39"></colgroup>
            <thead>
              <tr><th class="cap" colspan="13">Limitações (ABNT NBR 8800, 6.2.6)</th></tr>
              <tr><th rowspan="2">Descrição</th><th rowspan="2">Tipo</th><th rowspan="2">P.S.</th><th rowspan="2">t<small>(mm)</small></th><th colspan="2">Comprimento</th><th colspan="3">Perna</th><th rowspan="2">Chanfro<small>(mm)</small></th><th colspan="3">Garganta efetiva</th></tr>
              <tr class="units"><th>l<sub>w,min</sub><small>(mm)</small></th><th>l<sub>w</sub><small>(mm)</small></th><th>d<sub>w,min</sub><small>(mm)</small></th><th>d<sub>w,max</sub><small>(mm)</small></th><th>d<sub>w</sub><small>(mm)</small></th><th>ψ<small>(graus)</small></th><th>t<sub>w,min</sub><small>(mm)</small></th><th>t<sub>w</sub><small>(mm)</small></th></tr>
            </thead>
            <tbody>
              <tr><td>Enrijecedor y-y (x = -86): Soldadura à placa base</td><td>De ângulo</td><td>SMAW</td><td>6</td><td>40</td><td>450</td><td>3</td><td>6</td><td>6</td><td>--</td><td>--</td><td>--</td><td>--</td></tr>
              <tr><td>Enrijecedor y-y (x = 86): Soldadura à placa base</td><td>De ângulo</td><td>SMAW</td><td>6</td><td>40</td><td>450</td><td>3</td><td>6</td><td>6</td><td>--</td><td>--</td><td>--</td><td>--</td></tr>
              <tr><td>Soldadura dos pernos à placa base</td><td>Com penetração parcial</td><td>SMAW</td><td>18</td><td>40</td><td>60</td><td>--</td><td>--</td><td>--</td><td>8</td><td>90.00</td><td>6</td><td class="bad">5</td></tr>
            </tbody>
            <tfoot><tr><td colspan="13" class="notes">
              <p class="tight">P.S.: Procedimento de soldagen.</p><p class="tight">t: Menor espessura do metal-base.</p>
              <p>l<sub>w</sub>: Comprimento total da solda.</p><p>d<sub>w</sub>: Perna da solda.</p><p>ψ: angle in skeewed T joint (AWS D1.1/D1.1M, 2.3.3.7)</p><p class="tight">t<sub>w,min</sub>: Espessura mínima de garganta efetiva de soldas.</p><p>t<sub>w</sub>: Garganta efetiva</p><p class="tight">--: A verificação não é necessária.</p>
            </td></tr></tfoot>
          </table>
          <table class="limits">
            <colgroup><col><col class="w45"><col class="w35"><col class="w35"><col class="w72"><col class="w88"><col class="w219"><col class="w166"><col class="w196"></colgroup>
            <thead>
              <tr><th class="cap" colspan="9">Verificação de cordões de soldadura</th></tr>
              <tr><th></th><th></th><th></th><th></th><th></th><th>Metal</th><th>Cisalhamento (Metal de</th><th></th><th>Coeficiente de</th></tr>
            </thead>
          </table>
        </article>
        <div class="docscroll"><svg class="chev"><path d="M1 9l5-6 5 6"/></svg><span></span><svg class="chev"><path d="M1 3l5 6 5-6"/></svg></div>
      </div>
    </div>
  </div>
  <svg class="mark" viewBox="0 0 150 240" aria-hidden="true"><ellipse cx="82" cy="40" rx="32" ry="37" fill="none" stroke="#ed1c24" stroke-width="4"/><path d="M75 87l72 76q2 2-1 2h-33v71H37v-71H4q-3 0-1-2z" fill="#ed1c24"/></svg>
</section>
</body>
</html>
```
FILE: styles.css
```css
* { box-sizing: border-box; }
html, body { height: 100%; }
body {
  margin: 0;
  display: flex;
  flex-direction: column;
  background: #f0f0f0;
  border-bottom: 1px solid #000;
  overflow: hidden;
  position: relative;
  font: 11px/14px "Liberation Sans", Arial, sans-serif;
  color: #111;
}
.defs { position: absolute; width: 0; height: 0; }
h1, h2, h3, h4, p { margin: 0; font-weight: normal; }
button { border: 0; padding: 0; margin: 0; background: none; font: inherit; color: inherit; display: flex; align-items: center; justify-content: center; }
svg { display: block; flex: none; }
.ic { width: 16px; height: 16px; }
.grow { flex: 1; }
button b { width: 0; height: 0; border: 3px solid transparent; border-top: 4px solid #444; border-bottom: 0; }

.titlebar { height: 23px; flex: none; background: #fff; display: flex; align-items: center; padding-left: 2px; gap: 5px; }
.titlebar h1 { flex: 1; font: 12px/16px "Open Sans", sans-serif; color: #999; }
.winbtns { display: flex; }
.winbtns button { width: 46px; height: 23px; }
.winbtns svg { width: 12px; height: 12px; fill: none; stroke: #111; }
.winbtns.pale svg { stroke: #999; }
.winbtns .off svg { stroke: #ccc; }

.menubar { height: 20px; flex: none; display: flex; align-items: center; gap: 12px; padding-left: 4px; font: 12px/16px "Open Sans", sans-serif; }
.menubar a { color: #111; text-decoration: none; }
.mdi { margin-left: auto; display: flex; gap: 2px; padding: 3px 2px 0 0; }
.mdi button { width: 14px; height: 15px; background: #fff; border: 1px solid #ddd; }
.mdi svg { width: 12px; height: 12px; fill: none; stroke: #6b7d90; stroke-width: 2; }

.toolbar { height: 27px; flex: none; display: flex; align-items: center; padding-left: 1px; border-bottom: 1px solid #a0a0a0; box-shadow: 0 1px #fff; }
.toolbar button { width: 24px; height: 24px; flex: none; }
.toolbar button svg { width: 16px; height: 16px; }
.toolbar button.wide { width: 28px; gap: 2px; }
.toolbar i { width: 1px; height: 24px; margin: 0 3px; background: #c4c4c4; flex: none; }
.toolbar .dim { color: #aaa; }
.toolbar .navy { color: #14148c; }
.toolbar .flip svg { transform: scaleX(-1); }
.toolbar .on { border: 1px solid #999; background: #e2e2e2; }
.toolbar .teal { background: #a5dede; }
.toolbar .sky { background: #90d2f5; border-color: #2a86c8; }
.second { height: 28px; }
.loose { display: flex; align-items: center; }
.toolbar .loose button { width: 25px; }

.view { flex: 1; min-height: 0; display: grid; grid-template: 18px 1fr 18px / 20px 1fr 17px; border-top: 1px solid #a0a0a0; border-left: 1px solid #888; }
.view > * { min-width: 0; min-height: 0; }
.scene { width: 100%; height: 100%; background: #000; font-family: "Liberation Sans", Arial, sans-serif; }
.chev { width: 12px; height: 12px; fill: none; stroke: #555; stroke-width: 2; }
.corner svg { width: 18px; height: 18px; margin-left: 1px; }
.hbar { grid-column: 2 / 4; display: flex; align-items: center; padding: 0 3px; }
.hbar.bottom { grid-column: 1 / 4; padding: 0 20px 0 23px; background: #f0f0f0; border-top: 1px solid #fff; }
.hbar .thumb { height: 14px; flex: 1; margin: 0 432px 0 73px; background: #a6a6a6; }
.vbar { display: flex; flex-direction: column; align-items: center; justify-content: space-between; padding: 4px 1px; }
.vbar span { align-self: stretch; background: #cdcdcd; }
.vbar.left span { height: 42px; margin-top: -24px; }
.vbar.right span { flex: 1; margin: 76px 0 108px; }

.dialog { position: absolute; left: 190px; right: 191px; top: 83px; bottom: 80px; background: #f0f0f0; border: 1px solid #666; box-shadow: 0 3px 12px rgba(0,0,0,.45); display: flex; flex-direction: column; }
.dlgtitle { height: 30px; flex: none; background: #fff; display: flex; align-items: center; padding-left: 8px; gap: 6px; }
.dlgtitle h2 { flex: 1; font: 12px/16px "Open Sans", sans-serif; }
.dlgbody { flex: 1; min-height: 0; display: flex; padding-left: 3px; }
.elements { width: 300px; flex: none; margin: 3px 0; border: 1px solid #828790; background: #fff; padding: 0 2px 0 1px; }
table { border-collapse: collapse; width: 100%; }
th { font-weight: normal; }
.elements th { height: 26px; text-align: left; padding: 0 6px; }
.elements td { height: 18px; padding: 0 3px; }
.elements .sel td { height: 20px; background: #dbc0c0; border-bottom: 1px solid #ccc; }
.vsplit { width: 9px; display: flex; align-items: center; justify-content: center; }
.vsplit s { width: 3px; height: 15px; background: repeating-linear-gradient(#555 0 2px, transparent 2px 4px); }
.hsplit { height: 6px; flex: none; display: flex; align-items: center; justify-content: center; }
.hsplit s { width: 15px; height: 2px; background: repeating-linear-gradient(90deg, #555 0 3px, transparent 3px 4px); }

.results { flex: 1; min-width: 0; display: flex; flex-direction: column; }
.filter { height: 22px; flex: none; display: flex; align-items: center; padding: 0 5px 0 3px; gap: 3px; }
.filter input { appearance: none; width: 13px; height: 13px; margin: 0; border: 1px solid #333; background: #fff; }
.filter button { gap: 4px; }
.rep { width: 14px; height: 16px; }
.checks { height: 202px; flex: none; border: 1px solid #828790; background: #fff; padding: 0 2px 0 1px; }
.checks th { height: 26px; text-align: left; padding: 0 7px; }
.checks .c1 { width: 66px; padding-left: 6px; border-right: 1px solid #ddd; }
.checks td { height: 18px; padding: 0 3px; border-bottom: 1px solid #c0c0c0; }
.checks td:first-child { border-right: 1px solid #ddd; }
.st { display: flex; align-items: center; gap: 4px; }
.pass { width: 12px; height: 12px; margin: 0 2px; }
.checks .err td { background: #dbc0c0; }
.checks .err td:first-child { background: linear-gradient(90deg, #fff 22px, #f5d8d6 22px); }
.checks .err td:last-child { outline: 1px dotted #111; outline-offset: -1px; }
.alert { height: 30px; flex: none; margin-top: 4px; padding-left: 3px; gap: 3px; display: flex; align-items: center; background: #ebdfb1; border: 1px solid #d8cb98; border-right: 0; }
.subject { height: 16px; flex: none; padding-left: 4px; background: #d1d1d1; font: bold 12px/16px "Liberation Sans", Arial, sans-serif; }
.actions { height: 32px; flex: none; display: flex; align-items: center; gap: 4px; padding: 0 5px; }
.actions button { gap: 5px; }
.actions svg { width: 20px; height: 20px; }
.docpane { flex: 1; min-height: 0; display: flex; border: 2px solid #777; border-right-width: 0; border-bottom: 1px solid #ddd; background: #fff; }
.doc { flex: 1; min-width: 0; overflow: hidden; padding: 0 10px; color: #000; font: 15px/18px "DejaVu Sans", Verdana, sans-serif; display: flex; flex-direction: column; }
.prev { height: 3px; flex: none; margin: 0 90px 36px 89px; border: 1px solid #000; border-top: 0; }
.doc h4 { font-weight: bold; font-size: 14px; }
.limits { margin-top: 36px; table-layout: fixed; font-size: 15px; line-height: 16px; flex: none; }
.limits th, .limits td { border: 1px solid #000; height: 21px; padding: 0; text-align: center; white-space: nowrap; }
.limits th { background: #f2f1ef; }
.limits th.cap { background: #dad6d0; font-weight: bold; }
.limits .units th { height: 46px; }
.limits small { display: block; font-size: 12px; line-height: 18px; }
sub { font-size: 12px; line-height: 0; vertical-align: -8px; }
.units sub + small { padding-top: 10px; line-height: 16px; }
.limits tbody td:first-child { text-align: left; padding-left: 1px; }
.limits td.bad { background: #f6c3c0; }
.limits td.notes { text-align: left; height: 151px; padding: 0 20px; font-size: 12px; font-style: italic; vertical-align: top; white-space: normal; }
.notes p { line-height: 22px; }
.notes p.tight { line-height: 15px; }
.notes sub { font-size: 10px; vertical-align: -5px; }
.w196 { width: 196px; } .w56 { width: 56px; } .w39 { width: 39px; } .w64 { width: 64px; } .w51 { width: 51px; }
.w55 { width: 55px; } .w60 { width: 60px; } .w37 { width: 37px; } .w68 { width: 68px; } .w54 { width: 54px; }
.w45 { width: 45px; } .w35 { width: 35px; } .w72 { width: 72px; } .w88 { width: 88px; } .w219 { width: 219px; } .w166 { width: 166px; }
.docscroll { width: 17px; margin-right: 2px; background: #f0f0f0; display: flex; flex-direction: column; align-items: center; padding: 15px 1px; }
.docscroll span { align-self: stretch; flex: 1; margin: 246px 0 76px; background: #cdcdcd; }
.mark { position: absolute; right: -25px; bottom: 18px; width: 150px; height: 240px; }
```
